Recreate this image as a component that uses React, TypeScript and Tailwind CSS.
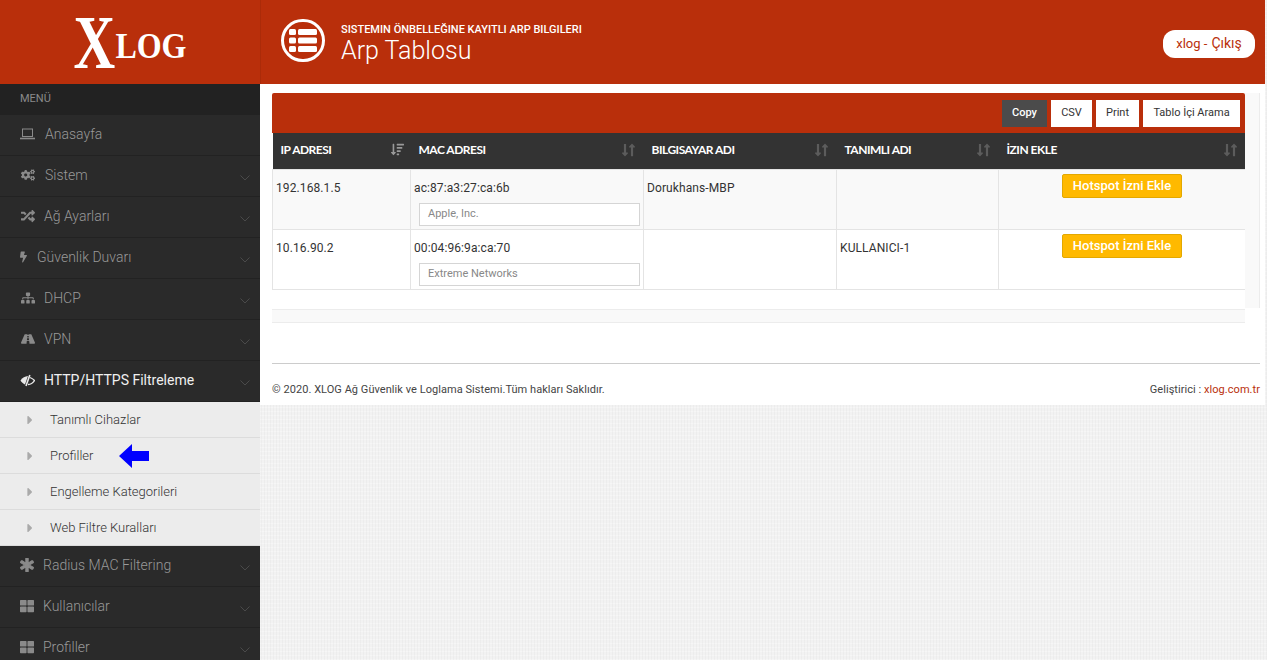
import React from "react";
import { FaCogs, FaRandom, FaBolt, FaSitemap, FaRoad, FaAsterisk, FaThLarge, FaCaretRight, FaSortAmountDown, FaLongArrowAltDown, FaLongArrowAltUp } from "react-icons/fa";

type IconComp = React.ComponentType<{ size?: number; stroke?: string; strokeWidth?: number }>;
type MenuItem = { label: string; icon: IconComp; box: string; chevron?: boolean; active?: boolean };

function LaptopIcon() {
  return (
    <svg width="15" height="12" viewBox="0 0 15 12" fill="none" stroke="currentColor">
      <rect x="2.5" y="1" width="10" height="7.5" strokeWidth="1" />
      <path d="M0 10.5 H15" strokeWidth="1.6" />
    </svg>
  );
}

function EyeSlashIcon() {
  return (
    <svg width="16" height="13" viewBox="0 0 15 12" fill="none">
      <path d="M0.5 6 C2.5 3.2 5 2 8 1.6 L5 10 C3 9.2 1.5 7.8 0.5 6 Z" fill="currentColor" />
      <path d="M9.8 0.6 L6 11.4" stroke="currentColor" strokeWidth="1.6" />
      <path d="M10 3 C11.8 3.8 13.4 4.8 14.5 6 C13 8.2 10.5 9.8 8 10" stroke="currentColor" strokeWidth="1.3" />
    </svg>
  );
}

function ListIcon() {
  return (
    <svg width="28" height="23" viewBox="0 0 28 23" fill="#fff">
      <rect x="0" y="0" width="7" height="6" rx="1.5" />
      <rect x="9" y="0" width="19" height="6" rx="1.5" />
      <rect x="0" y="8.5" width="7" height="6" rx="1.5" />
      <rect x="9" y="8.5" width="19" height="6" rx="1.5" />
      <rect x="0" y="17" width="7" height="6" rx="1.5" />
      <rect x="9" y="17" width="19" height="6" rx="1.5" />
    </svg>
  );
}

const topMenu: MenuItem[] = [
  { label: "Anasayfa", icon: LaptopIcon, box: "w-[15px] mr-[10px]" },
  { label: "Sistem", icon: FaCogs, box: "w-[15px] mr-[10px]", chevron: true },
  { label: "Ağ Ayarları", icon: FaRandom, box: "w-[15px] mr-[9px]", chevron: true },
  { label: "Güvenlik Duvarı", icon: FaBolt, box: "w-[7px] mr-[10px]", chevron: true },
  { label: "DHCP", icon: FaSitemap, box: "w-[15px] mr-[9px]", chevron: true },
  { label: "VPN", icon: FaRoad, box: "w-[15px] mr-[9px]", chevron: true },
  { label: "HTTP/HTTPS Filtreleme", icon: EyeSlashIcon, box: "w-[15px] mr-[9px]", chevron: true, active: true },
];

const subMenu = ["Tanımlı Cihazlar", "Profiller", "Engelleme Kategorileri", "Web Filtre Kuralları"];

const bottomMenu: MenuItem[] = [
  { label: "Radius MAC Filtering", icon: FaAsterisk, box: "w-[14px] mr-[9px]", chevron: true },
  { label: "Kullanıcılar", icon: FaThLarge, box: "w-[14px] mr-[9px]", chevron: true },
  { label: "Profiller", icon: FaThLarge, box: "w-[14px] mr-[9px]", chevron: true },
];

function Chevron() {
  return (
    <svg width="10" height="6" viewBox="0 0 10 6" className="absolute right-[10px] top-[19px]" fill="none" stroke="#4a4a4a" strokeWidth="1">
      <path d="M0.5 0.5 L5 5 L9.5 0.5" />
    </svg>
  );
}

function SideRow({ item }: { item: MenuItem }) {
  const Icon = item.icon;
  const heavy = item.icon === FaAsterisk;
  return (
    <div className="relative flex h-[41px] items-center border-b border-[#222] pb-[2px] pl-[20px] text-[14px] font-light">
      <span className={`${item.box} flex justify-center ${item.active ? "text-[#e8e8e8]" : "text-[#8a8a8a]"}`}>
        <Icon size={14} stroke="currentColor" strokeWidth={heavy ? 40 : 0} />
      </span>
      <span className={item.active ? "font-normal text-[#f0f0f0]" : "text-[#999]"}>{item.label}</span>
      {item.chevron && <Chevron />}
    </div>
  );
}

function SortIcon({ active }: { active?: boolean }) {
  if (active) return <FaSortAmountDown size={13} className="-mr-[1px] text-[#999]" />;
  return (
    <span className="-mr-[3px] flex text-[#5c5c5c]">
      <FaLongArrowAltDown size={14} className="-mr-[7px]" />
      <FaLongArrowAltUp size={14} />
    </span>
  );
}

const heads = ["IP ADRESI", "MAC ADRESI", "BILGISAYAR ADI", "TANIMLI ADI", "İZIN EKLE"];

const rows = [
  { ip: "192.168.1.5", mac: "ac:87:a3:27:ca:6b", vendor: "Apple, Inc.", pc: "Dorukhans-MBP", name: "" },
  { ip: "10.16.90.2", mac: "00:04:96:9a:ca:70", vendor: "Extreme Networks", pc: "", name: "KULLANICI-1" },
];

export default function App() {
  return (
    <div className="flex h-[660px] w-[1267px] flex-col overflow-hidden bg-[#f2f2f2] bg-[repeating-linear-gradient(90deg,#00000006_0_1px,transparent_1px_3px),repeating-linear-gradient(0deg,#ffffff50_0_1px,transparent_1px_4px)] font-['Roboto',sans-serif]">
      <header className="flex h-[84px] w-[1265px] shrink-0 bg-[#b92f0b] text-white">
        <div className="flex w-[261px] items-center justify-center border-r border-[#ab2b09]">
          <span className="-mx-[6.5px] -mt-[1px] scale-x-[0.76] font-['Liberation_Serif',serif] text-[76px] font-bold leading-none">X</span>
          <span className="mt-[7px] scale-y-[1.12] font-['Liberation_Serif',serif] text-[32px] font-bold leading-none">LOG</span>
        </div>
        <div className="flex flex-1 items-center pl-[20px] pr-[10px]">
          <div className="-mt-[4px] flex h-[43px] w-[44px] items-center justify-center rounded-full border-[3px] border-white">
            <ListIcon />
          </div>
          <div className="ml-[16px] pt-[3px]">
            <div className="text-[11px] font-medium leading-[13px]">SISTEMIN ÖNBELLEĞINE KAYITLI ARP BILGILERI</div>
            <div className="text-[25px] font-light leading-[29px]">Arp Tablosu</div>
          </div>
          <div className="ml-auto mt-[3px] flex h-[28px] w-[92px] items-center justify-center rounded-[12px] bg-white text-[13px] text-[#b92f0b]">
            xlog - <span className="ml-[4px] text-[14px]">Çıkış</span>
          </div>
        </div>
      </header>

      <div className="flex min-h-0 flex-1">
        <aside className="w-[260px] shrink-0 bg-[#2a2a2a]">
          <div className="flex h-[31px] items-center bg-[#222] pl-[20px] text-[11px] text-[#8a8a8a]">MENÜ</div>
          {topMenu.map((m) => (
            <SideRow key={m.label} item={m} />
          ))}
          <div className="bg-[#ececec]">
            {subMenu.map((s) => (
              <div key={s} className="flex h-[36px] items-center border-b border-[#dcdcdc] pl-[23px] text-[13px] font-light text-[#333]">
                <FaCaretRight size={14} className="text-[#aaa]" />
                <span className="ml-[13px]">{s}</span>
                {s === "Profiller" && (
                  <svg width="30" height="24" viewBox="0 0 30 24" className="ml-[26px]">
                    <path d="M0 12 L13 0 V7 H30 V17 H13 V24 Z" fill="#0000ff" />
                  </svg>
                )}
              </div>
            ))}
          </div>
          {bottomMenu.map((m) => (
            <SideRow key={m.label + m.label.length} item={m} />
          ))}
        </aside>

        <main className="h-[321px] w-[1005px] self-start bg-white pl-[12px] pt-[9px]">
          <div className="flex">
            <div className="w-[973px]">
              <div className="flex h-[40px] items-center justify-end gap-[4px] rounded-t-[2px] bg-[#b92f0b] pr-[5px] text-[11px]">
                <button className="h-[27px] w-[45px] bg-[#4b4b4b] pt-[1px] font-medium text-white">Copy</button>
                <button className="h-[27px] w-[41px] bg-white pt-[1px] text-[#333]">CSV</button>
                <button className="h-[27px] w-[43px] bg-white pt-[1px] text-[#333]">Print</button>
                <button className="h-[27px] w-[97px] bg-white pt-[1px] text-[#333]">Tablo İçi Arama</button>
              </div>
              <table className="w-[973px] table-fixed border-collapse text-[12px] tracking-[0.1px] text-[#333]">
                <colgroup>
                  <col className="w-[138px]" />
                  <col className="w-[233px]" />
                  <col className="w-[193px]" />
                  <col className="w-[162px]" />
                  <col className="w-[247px]" />
                </colgroup>
                <thead>
                  <tr className="h-[36px] bg-[#333] font-['Lato',sans-serif] text-[12px] text-white">
                    {heads.map((h, i) => (
                      <th key={h} className="px-[8px] pb-[2px] text-left font-bold tracking-[-0.5px]">
                        <div className="flex items-center justify-between">
                          {h}
                          <SortIcon active={i === 0} />
                        </div>
                      </th>
                    ))}
                  </tr>
                </thead>
                <tbody>
                  {rows.map((r, i) => (
                    <tr key={r.ip} className={i === 0 ? "h-[60px] bg-[#f9f9f9]" : "h-[60px] bg-white"}>
                      <td className="border border-[#e4e4e4] px-[3px] pt-[9px] align-top">{r.ip}</td>
                      <td className="border border-[#e4e4e4] px-[3px] pt-[9px] align-top">
                        {r.mac}
                        <div className="ml-[5px] mt-[6px] flex h-[23px] w-[221px] items-center border border-[#d5d5d5] bg-white pl-[8px] pt-[1px] text-[11px] tracking-normal text-[#888]">
                          {r.vendor}
                        </div>
                      </td>
                      <td className="border border-[#e4e4e4] px-[3px] pt-[9px] align-top">{r.pc}</td>
                      <td className="border border-[#e4e4e4] px-[3px] pt-[9px] align-top">{r.name}</td>
                      <td className="border border-[#e4e4e4] pt-[4px] align-top">
                        <div className="flex justify-center">
                          <button className="h-[24px] w-[120px] rounded-[2px] border border-[#e3a800] bg-[#ffb900] text-[13px] font-medium tracking-normal text-white">
                            Hotspot İzni Ekle
                          </button>
                        </div>
                      </td>
                    </tr>
                  ))}
                </tbody>
              </table>
              <div className="mt-[19px] h-[14px] border-y border-[#ececec] bg-[#f9f9f9]" />
            </div>
            <div className="h-[215px] w-[15px] border-r border-[#ececec] bg-[#f9f9f9]" />
          </div>
          <div className="mr-[5px] mt-[40px] flex h-[43px] items-center justify-between border-t border-[#ccc] pt-[11px] text-[11px] tracking-[0.05px] text-[#444]">
            <span>© 2020. XLOG Ağ Güvenlik ve Loglama Sistemi.Tüm hakları Saklıdır.</span>
            <span>
              Geliştirici : <span className="text-[#b92f0b]">xlog.com.tr</span>
            </span>
          </div>
        </main>
      </div>
    </div>
  );
}
